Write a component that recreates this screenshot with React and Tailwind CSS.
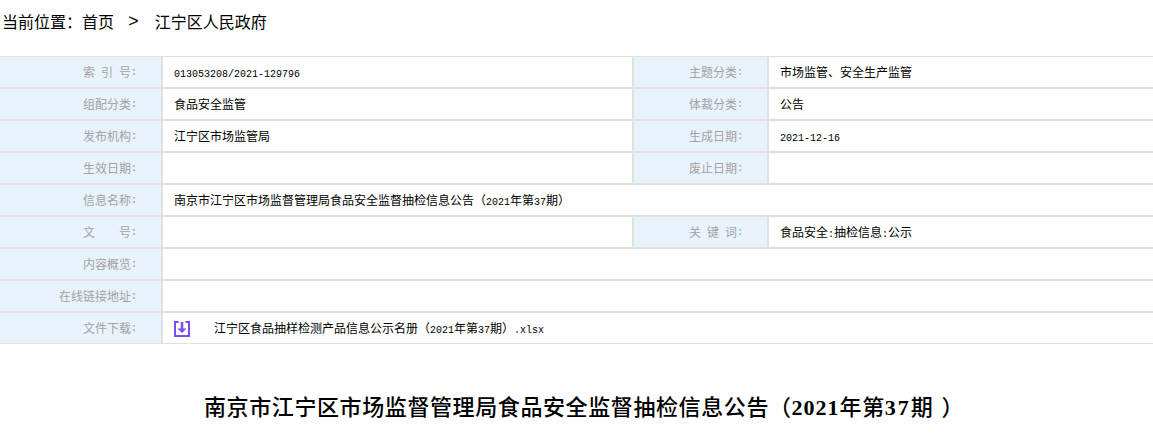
import React from 'react';

const sans = 'font-["Liberation_Sans","Noto_Sans_CJK_SC",sans-serif]';

// half width digits and latin in the table
function M({ children }) {
  return <span className='font-["Liberation_Mono",monospace] text-[10px]'>{children}</span>;
}

function Label({ children, className = '' }) {
  return (
    <div className={`flex items-center justify-end bg-[#e8f3fd] text-[12px] text-[#a3a3a3] pt-px pr-[24px] whitespace-pre ${className}`}>
      {children}
      <span className='font-["Liberation_Mono",monospace] text-[10px] font-bold w-[6px]'>:</span>
    </div>
  );
}

function Value({ children, className = '' }) {
  return (
    <div className={`flex items-center pt-px pl-[11px] text-[12px] text-black ${className}`}>
      <span>{children}</span>
    </div>
  );
}

function Row({ label, value, label2, value2, last }) {
  return (
    <div className={`flex border-[#e0e0e0] ${last ? 'h-[31px] border-b' : 'h-[32px] border-b-2'}`}>
      <Label className="w-[163px] shrink-0 border-r-2 border-[#e0e0e0]">{label}</Label>
      {label2 ? (
        <>
          <Value className="w-[471px] shrink-0 border-r-2 border-[#e0e0e0]">{value}</Value>
          <Label className="w-[135px] shrink-0 border-r-2 border-[#e0e0e0]">{label2}</Label>
          <Value className="flex-1">{value2}</Value>
        </>
      ) : (
        <Value className="flex-1">{value}</Value>
      )}
    </div>
  );
}

function DownloadIcon() {
  return (
    <svg width="16" height="16" viewBox="0 0 16 16" fill="none">
      <path d="M4.5 1H1v14h14V1h-3.5" stroke="#7b4dee" strokeWidth="2" />
      <path d="M8 1v7" stroke="#7b4dee" strokeWidth="2.5" />
      <path d="M3.5 7.5h9L8 12z" fill="#7b4dee" />
    </svg>
  );
}

export default function App() {
  return (
    <div className={`w-[1153px] h-[436px] overflow-hidden bg-white ${sans}`}>
      <div className="flex items-center h-[45px] text-[16px] text-black">
        <span className="ml-[2px]">当前位置：首页</span>
        <span className='ml-[14px] font-["Liberation_Mono",monospace] text-[18px]'>&gt;</span>
        <span className="ml-[16px]">江宁区人民政府</span>
      </div>

      <div className="mt-[11px] border-t border-[#e0e0e0]">
        <Row label={'索\u2002引\u2002号'} value={<M>013053208/2021-129796</M>} label2="主题分类" value2="市场监管、安全生产监管" />
        <Row label="组配分类" value="食品安全监管" label2="体裁分类" value2="公告" />
        <Row label="发布机构" value="江宁区市场监管局" label2="生成日期" value2={<M>2021-12-16</M>} />
        <Row label="生效日期" value="" label2="废止日期" value2="" />
        <Row label="信息名称" value={<>南京市江宁区市场监督管理局食品安全监督抽检信息公告（<M>2021</M>年第<M>37</M>期）</>} />
        <Row label="文　　号" value="" label2={'关\u2002键\u2002词'} value2={<>食品安全<M>:</M>抽检信息<M>:</M>公示</>} />
        <Row label="内容概览" value="" />
        <Row label="在线链接地址" value="" />
        <Row
          last
          label="文件下载"
          value={
            <span className="flex items-center">
              <DownloadIcon />
              <span className="ml-[24px]">江宁区食品抽样检测产品信息公示名册（<M>2021</M>年第<M>37</M>期）<M>.xlsx</M></span>
            </span>
          }
        />
      </div>

      <h1 className='mt-[47px] ml-[204px] whitespace-nowrap text-[22px] tracking-[0.6px] font-medium text-black font-["Liberation_Serif","Noto_Sans_CJK_SC",serif]'>
        南京市江宁区市场监督管理局食品安全监督抽检信息公告（<span className="font-bold tracking-[1px]">2021</span>年第<span className="font-bold tracking-[2px]">37</span>期<span className="ml-[8px]">）</span>
      </h1>
    </div>
  );
}
